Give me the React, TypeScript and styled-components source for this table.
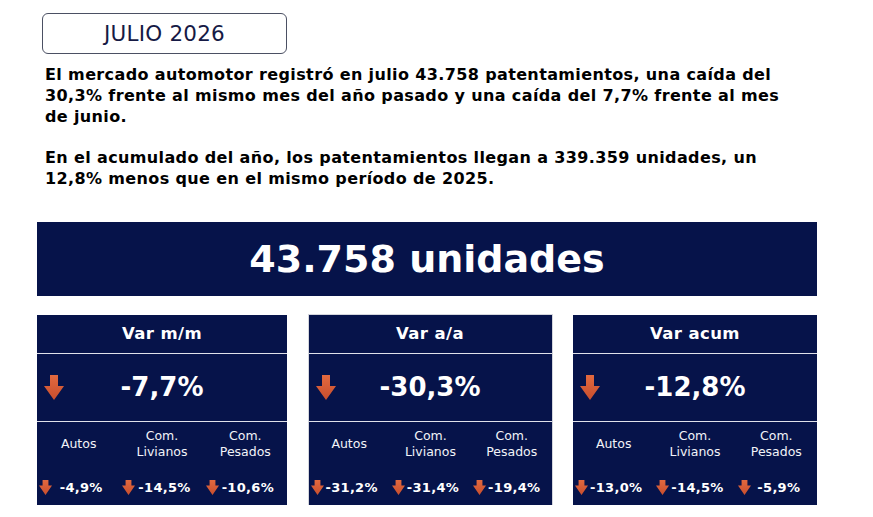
import React from "react";
import styled, { createGlobalStyle } from "styled-components";

const GlobalStyle = createGlobalStyle`
    html, body {
        margin: 0;
        padding: 0;
        background: #ffffff;
    }
    body {
        font-family: "DejaVu Sans", Verdana, sans-serif;
    }
`

const NAVY = "#06134a";

type Breakdown = {
    label: string[]
    value: string
}

type Variation = {
    title: string
    value: string
    items: Breakdown[]
    outlined?: boolean
}

const variations: Variation[] = [
    {
        title: "Var m/m",
        value: "-7,7%",
        items: [
            { label: ["Autos"], value: "-4,9%" },
            { label: ["Com.", "Livianos"], value: "-14,5%" },
            { label: ["Com.", "Pesados"], value: "-10,6%" },
        ],
    },
    {
        title: "Var a/a",
        value: "-30,3%",
        outlined: true,
        items: [
            { label: ["Autos"], value: "-31,2%" },
            { label: ["Com.", "Livianos"], value: "-31,4%" },
            { label: ["Com.", "Pesados"], value: "-19,4%" },
        ],
    },
    {
        title: "Var acum",
        value: "-12,8%",
        items: [
            { label: ["Autos"], value: "-13,0%" },
            { label: ["Com.", "Livianos"], value: "-14,5%" },
            { label: ["Com.", "Pesados"], value: "-5,9%" },
        ],
    },
]

const Page = styled.div`
    width: 873px;
    padding: 13px 0 0 37px;
    box-sizing: border-box;
`

const MonthBox = styled.div`
    margin-left: 5px;
    width: 245px;
    height: 41px;
    box-sizing: border-box;
    border: 1.5px solid #4b5063;
    border-radius: 6px;
    display: flex;
    align-items: center;
    justify-content: center;
    color: #161a45;
    font-size: 21.5px;
    letter-spacing: 0.2px;
`

const Summary = styled.div`
    margin: 11px 0 0 8px;
    color: #000;
    font-weight: bold;
    font-size: 16px;
    line-height: 20.8px;
    letter-spacing: 0.37px;
    white-space: nowrap;

    p {
        margin: 0 0 20.8px;
    }

    p:last-child {
        margin-bottom: 0;
    }
`

const Banner = styled.div`
    margin-top: 32px;
    width: 780px;
    height: 74px;
    background: ${NAVY};
    color: #fff;
    font-weight: bold;
    font-size: 38px;
    display: flex;
    align-items: center;
    justify-content: center;
`

const CardsRow = styled.div`
    margin-top: 19px;
    display: grid;
    grid-template-columns: 250px 243px 244px;
    column-gap: 21.5px;
`

const Card = styled.div<{ $outlined?: boolean }>`
    background: ${NAVY};
    color: #fff;
    display: flex;
    flex-direction: column;
    box-shadow: ${props => props.$outlined ? "0 0 0 1px #d4d6dd" : "none"};
`

const CardHeader = styled.div`
    height: 38px;
    display: flex;
    align-items: center;
    justify-content: center;
    font-weight: bold;
    font-size: 16.5px;
    letter-spacing: 0.4px;
    border-bottom: 1.5px solid #dfe1ea;
`

const CardMain = styled.div`
    height: 67px;
    display: grid;
    grid-template-columns: 37px 1fr 37px;
    align-items: center;
    border-bottom: 1.5px solid #dfe1ea;

    svg {
        margin-left: 7px;
    }
`

const MainValue = styled.div`
    text-align: center;
    font-weight: bold;
    font-size: 26px;
`

const CardSub = styled.div`
    height: 83px;
    display: grid;
    grid-template-columns: repeat(3, 1fr);
`

const SubCell = styled.div`
    display: flex;
    flex-direction: column;
    align-items: stretch;
`

const SubLabel = styled.div`
    height: 42px;
    margin-top: 1px;
    display: flex;
    flex-direction: column;
    align-items: center;
    justify-content: center;
    font-size: 12.5px;
    line-height: 16px;
    color: #f2f3f8;
`

const SubValue = styled.div`
    margin-top: 15px;
    display: grid;
    grid-template-columns: 15px 1fr 12px;
    align-items: center;
    padding-left: 2px;
    font-weight: bold;
    font-size: 13px;

    span {
        text-align: center;
        letter-spacing: 0.3px;
    }
`

const arrowPaths = {
    large: "M6 0 H14 V11 H20 L10 25 L0 11 H6 Z",
    small: "M5.5 0 H14.5 V9 H20 L10 25 L0 9 H5.5 Z",
}

const DownArrow: React.FC<{ width: number, height: number, variant: keyof typeof arrowPaths }> = ({ width, height, variant }) => (
    <svg width={width} height={height} viewBox="0 0 20 25" preserveAspectRatio="none">
        <defs>
            <linearGradient id="arrowFill" x1="0" y1="0" x2="0" y2="1">
                <stop offset="0" stopColor="#e2693f" />
                <stop offset="1" stopColor="#c84e2e" />
            </linearGradient>
        </defs>
        <path d={arrowPaths[variant]} fill="url(#arrowFill)" />
    </svg>
)

const VariationCard: React.FC<{ data: Variation }> = ({ data }) => (
    <Card $outlined={data.outlined}>
        <CardHeader>{data.title}</CardHeader>
        <CardMain>
            <DownArrow width={20} height={25} variant="large" />
            <MainValue>{data.value}</MainValue>
            <div />
        </CardMain>
        <CardSub>
            {data.items.map(item => (
                <SubCell key={item.label.join(" ")}>
                    <SubLabel>
                        {item.label.map(line => <div key={line}>{line}</div>)}
                    </SubLabel>
                    <SubValue>
                        <DownArrow width={13} height={15} variant="small" />
                        <span>{item.value}</span>
                        <div />
                    </SubValue>
                </SubCell>
            ))}
        </CardSub>
    </Card>
)

export default function App() {
    return <>
        <GlobalStyle />
        <Page>
            <MonthBox>JULIO 2026</MonthBox>
            <Summary>
                <p>
                    El mercado automotor registró en julio 43.758 patentamientos, una caída del<br />
                    30,3% frente al mismo mes del año pasado y una caída del 7,7% frente al mes<br />
                    de junio.
                </p>
                <p>
                    En el acumulado del año, los patentamientos llegan a 339.359 unidades, un<br />
                    12,8% menos que en el mismo período de 2025.
                </p>
            </Summary>
            <Banner>43.758 unidades</Banner>
            <CardsRow>
                {variations.map(v => <VariationCard key={v.title} data={v} />)}
            </CardsRow>
        </Page>
    </>
}
